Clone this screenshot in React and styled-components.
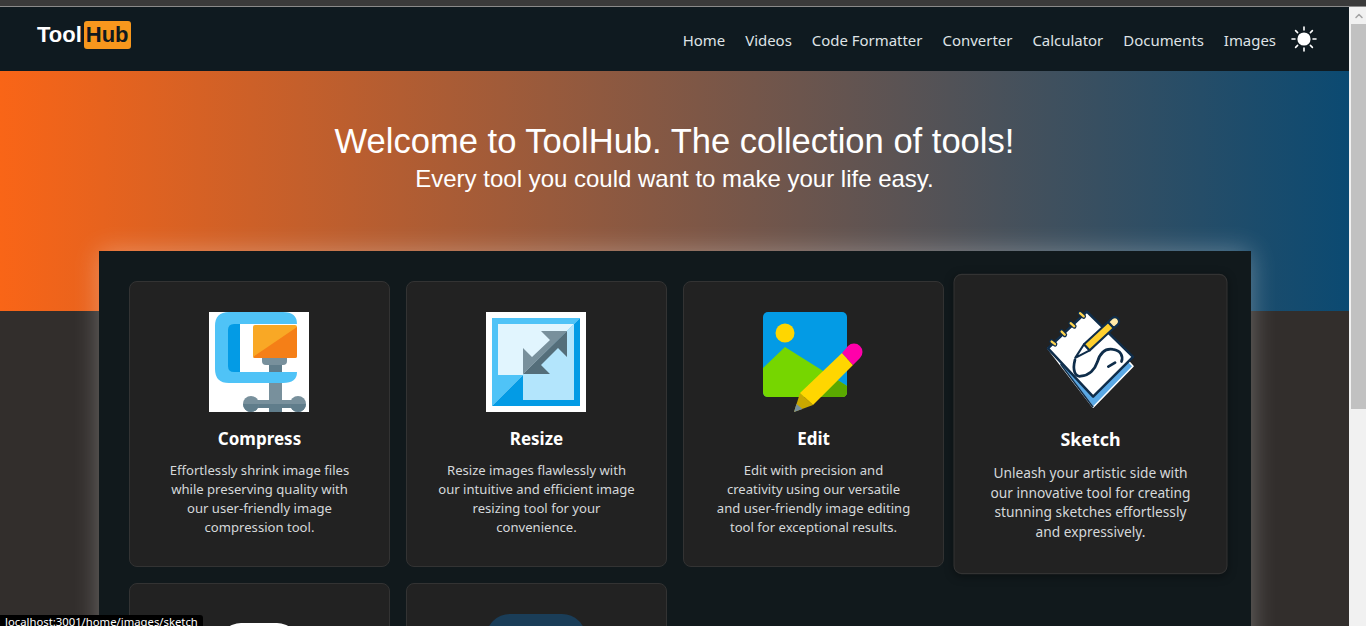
import React from 'react';
import styled, { createGlobalStyle } from 'styled-components';
import { ChevronUp } from 'lucide-react';

const Global = createGlobalStyle`
  html, body {
    margin: 0;
    height: 100%;
    overflow: hidden;
    background: #322e2c;
  }
  #root {
    height: 100%;
  }
`;

const Shell = styled.div`
  height: 626px;
  display: flex;
  flex-direction: column;
  overflow: hidden;
  position: relative;
`;

const WindowEdge = styled.div`
  height: 6px;
  flex: none;
  background: #3a3a3a;
  border-bottom: 1px solid #8a8a8a;
`;

const Body = styled.div`
  flex: 1;
  min-height: 0;
  display: flex;
`;

const Page = styled.div`
  flex: 1;
  min-width: 0;
  overflow: hidden;
  background: #322e2c;
`;

const ScrollTrack = styled.div`
  width: 17px;
  flex: none;
  background: #f1f1f1;
  display: flex;
  flex-direction: column;
  align-items: center;
  box-sizing: border-box;
  padding-left: 2px;
`;

const ScrollArrow = styled.div`
  height: 17px;
  display: flex;
  align-items: center;
  justify-content: center;
  color: #a3a3a3;
`;

const ScrollThumb = styled.div`
  width: 15px;
  height: 385px;
  background: #c1c1c1;
`;

const Nav = styled.nav`
  height: 64px;
  box-sizing: border-box;
  background: #0f1a20;
  display: flex;
  justify-content: space-between;
  padding: 0 32px 0 37px;
`;

const Logo = styled.div`
  display: flex;
  align-items: center;
  gap: 2px;
  height: 56px;
  font-family: 'Liberation Sans', Arial, sans-serif;
  font-weight: 700;
  font-size: 22px;
  color: #ffffff;
`;

const LogoBadge = styled.span`
  background: #f7971d;
  color: #10191f;
  border-radius: 3px;
  padding: 3px 2px;
  line-height: 22px;
`;

const NavLinks = styled.div`
  display: flex;
  align-items: center;
  gap: 20px;
  padding-top: 1px;
`;

const NavLink = styled.a`
  font-family: 'Noto Sans', 'Open Sans', sans-serif;
  font-size: 14.95px;
  color: #dfe3e6;
  text-decoration: none;
`;

const SunButton = styled.span`
  display: flex;
  margin-left: -5px;
  margin-top: -2px;
`;

const Hero = styled.header`
  height: 240px;
  box-sizing: border-box;
  padding-top: 49px;
  background: linear-gradient(90deg, #f96517 0%, #0b4a72 100%);
  text-align: center;
  font-family: 'Liberation Sans', Arial, sans-serif;
  color: #ffffff;
`;

const HeroTitle = styled.h1`
  margin: 0;
  font-size: 34.56px;
  font-weight: 400;
  line-height: 42px;
`;

const HeroSub = styled.p`
  margin: 0;
  font-size: 24px;
  line-height: 34px;
`;

const Panel = styled.main`
  width: 1152px;
  margin: -60px 0 0 99px;
  box-sizing: border-box;
  padding: 30px;
  position: relative;
  background: #11191c;
  box-shadow: 0 0 24px rgba(255, 255, 255, 0.3);
  display: grid;
  grid-template-columns: repeat(4, 261px);
  grid-auto-rows: 286px;
  gap: 16px;
`;

const Card = styled.article`
  box-sizing: border-box;
  padding-top: 30px;
  background: #222222;
  border: 1px solid #333333;
  border-radius: 8px;
  text-align: center;
  transform: ${(p) => (p.$hovered ? 'scale(1.05)' : 'none')};
  box-shadow: ${(p) => (p.$hovered ? '0 2px 8px rgba(0, 0, 0, 0.35)' : 'none')};
`;

const IconFrame = styled.svg`
  display: block;
  width: 100px;
  height: 100px;
  margin: 0 0 15px 79px;
`;

const CardTitle = styled.h3`
  margin: 0 0 10px;
  font-family: 'Noto Sans', 'Open Sans', sans-serif;
  font-size: 17px;
  font-weight: 700;
  line-height: 24px;
  color: #ffffff;
`;

const CardText = styled.p`
  margin: 0;
  font-family: 'Noto Sans', 'Open Sans', sans-serif;
  font-size: 13.1px;
  line-height: 19px;
  color: #d5d8da;
`;

const StatusTip = styled.div`
  position: absolute;
  left: 0;
  bottom: 0;
  width: 203px;
  height: 11px;
  overflow: hidden;
  box-sizing: border-box;
  padding-left: 5px;
  background: #000000;
  border-top-right-radius: 3px;
  font-family: 'Noto Sans', 'Open Sans', sans-serif;
  font-size: 11.3px;
  line-height: 13px;
  color: #ffffff;
  white-space: nowrap;
`;

const Sun = () => (
  <svg width="26" height="26" viewBox="0 0 26 26" stroke="#fff" strokeWidth="1.6" strokeLinecap="round">
    <circle cx="13" cy="13" r="6.6" fill="#fff" stroke="none" />
    <path d="M13 1v3M13 22v3M1 13h3M22 13h3M4.6 4.6l2 2M19.4 19.4l2 2M4.6 21.4l2-2M19.4 6.6l2-2" />
  </svg>
);

const CompressIcon = () => (
  <IconFrame viewBox="0 0 100 100">
    <rect width="100" height="100" fill="#fff" />
    <path d="M20 0H74Q88 0 88 12H31V60H88Q88 71 74 71H20Q6 71 6 57V14Q6 0 20 0Z" fill="#4fc3f7" />
    <path d="M25 12H31V60H25Q19 60 19 54V18Q19 12 25 12Z" fill="#039be5" />
    <rect x="60" y="71" width="13" height="29" fill="#78909c" />
    <rect x="60" y="53" width="13" height="7" fill="#607d8b" />
    <rect x="40" y="88" width="50" height="4" fill="#78909c" />
    <rect x="40" y="92" width="50" height="4" fill="#607d8b" />
    <circle cx="42" cy="92" r="8" fill="#78909c" />
    <circle cx="89" cy="92" r="8" fill="#78909c" />
    <path d="M34 92H50A8 8 0 0 1 34 92ZM81 92H97A8 8 0 0 1 81 92Z" fill="#607d8b" />
    <rect x="60" y="92" width="13" height="8" fill="#607d8b" />
    <path d="M53 46H78V49Q78 53 74 53H57Q53 53 53 49Z" fill="#78909c" />
    <rect x="44" y="13" width="44" height="33" rx="2" fill="#f9a825" />
    <path d="M88 15V44Q88 46 86 46H46Q45 46 44 45Z" fill="#f57f17" />
  </IconFrame>
);

const ResizeIcon = () => (
  <IconFrame viewBox="0 0 100 100">
    <rect width="100" height="100" fill="#fff" />
    <path d="M6 6H94L6 94Z" fill="#4fc3f7" />
    <path d="M94 6V94H6Z" fill="#039be5" />
    <path d="M12 12H88L37 63H12Z" fill="#e1f5fe" />
    <path d="M88 12V88H37V63Z" fill="#b3e5fc" />
    <path d="M81 19H55L64 28L46 45L37 36V62Z" fill="#78909c" />
    <path d="M81 19V45L72 36L55 53L64 62H37Z" fill="#546e7a" />
  </IconFrame>
);

const EditIcon = () => (
  <IconFrame viewBox="0 0 100 100">
    <rect width="84" height="85" rx="5" fill="#039be5" />
    <circle cx="22" cy="21" r="9.5" fill="#ffd600" />
    <path d="M0 56L22 35L84 74V80Q84 85 79 85H5Q0 85 0 80Z" fill="#76d600" />
    <path d="M74.8 68.2L84 74V80Q84 85 79 85H58Z" fill="#5aa800" />
    <path d="M31 100L37 81L50 93Z" fill="#c9a800" />
    <path d="M31 100L33.5 92L39.5 97Z" fill="#78909c" />
    <path d="M37 81L79 41L90 53L50 93Z" fill="#ffd600" />
    <path d="M79 41L85 34A8 8 0 0 1 97 46L90 53Z" fill="#ff00aa" />
  </IconFrame>
);

const SketchIcon = () => (
  <IconFrame viewBox="0 0 100 100">
    <path d="M10 40L53 96L91 57L80 45Z" fill="#5aa9e6" stroke="#fff" strokeWidth="1.5" strokeLinejoin="round" />
    <path d="M22 55L53 96" stroke="#0f2d4a" strokeWidth="1.5" />
    <path d="M47 5L91 48L53 86L10 40Z" fill="#fff" stroke="#0f2d4a" strokeWidth="2.4" strokeLinejoin="round" />
    <path d="M13.5 33.5L16.7 36M23 24L26 27M31.6 16L35 19M40.5 6.5L44 9.5" stroke="#0f2d4a" strokeWidth="4.5" strokeLinecap="round" />
    <path d="M13.5 33.5L16.7 36M23 24L26 27M31.6 16L35 19M40.5 6.5L44 9.5" stroke="#ffd54f" strokeWidth="2.2" strokeLinecap="round" />
    <path d="M36 49L44.3 36.1L49.7 41.9Z" fill="#fff" stroke="#0f2d4a" strokeWidth="2" strokeLinejoin="round" />
    <path d="M44.3 36.1L67.3 14.8L72.7 20.6L49.7 41.9Z" fill="#ffd02e" stroke="#0f2d4a" strokeWidth="2" strokeLinejoin="round" />
    <path d="M67.3 14.8L71 11.3Q74 9 76.5 11.5Q79 14.5 76.4 17.2L72.7 20.6Z" fill="#ffe9a8" stroke="#0f2d4a" strokeWidth="2" strokeLinejoin="round" />
    <path
      d="M35.7 51C33 61 36 67 41 66.5C50 66 55 59 57 53C60 43 66 40 72 41C79 42 82 47 80 52.5M67.5 57.3L73.9 53.5"
      fill="none"
      stroke="#0f2d4a"
      strokeWidth="2.6"
      strokeLinecap="round"
    />
  </IconFrame>
);

const ToggleIcon = () => (
  <IconFrame viewBox="0 0 100 100">
    <rect x="10" y="9" width="80" height="60" rx="22" fill="#fff" />
  </IconFrame>
);

const VideoIcon = () => (
  <IconFrame viewBox="0 0 100 100">
    <rect width="100" height="100" rx="24" fill="#1a3d58" />
  </IconFrame>
);

const links = ['Home', 'Videos', 'Code Formatter', 'Converter', 'Calculator', 'Documents', 'Images'];

const tools = [
  {
    title: 'Compress',
    icon: <CompressIcon />,
    lines: ['Effortlessly shrink image files', 'while preserving quality with', 'our user-friendly image', 'compression tool.'],
  },
  {
    title: 'Resize',
    icon: <ResizeIcon />,
    lines: ['Resize images flawlessly with', 'our intuitive and efficient image', 'resizing tool for your', 'convenience.'],
  },
  {
    title: 'Edit',
    icon: <EditIcon />,
    lines: ['Edit with precision and', 'creativity using our versatile', 'and user-friendly image editing', 'tool for exceptional results.'],
  },
  {
    title: 'Sketch',
    icon: <SketchIcon />,
    hovered: true,
    lines: ['Unleash your artistic side with', 'our innovative tool for creating', 'stunning sketches effortlessly', 'and expressively.'],
  },
  { key: 'fifth', icon: <ToggleIcon />, lines: [] },
  { key: 'sixth', icon: <VideoIcon />, lines: [] },
];

const App = () => (
  <>
    <Global />
    <Shell>
      <WindowEdge />
      <Body>
        <Page>
          <Nav>
            <Logo>
              Tool <LogoBadge>Hub</LogoBadge>
            </Logo>
            <NavLinks>
              {links.map((l) => (
                <NavLink key={l}>{l}</NavLink>
              ))}
              <SunButton>
                <Sun />
              </SunButton>
            </NavLinks>
          </Nav>
          <Hero>
            <HeroTitle>Welcome to ToolHub. The collection of tools!</HeroTitle>
            <HeroSub>Every tool you could want to make your life easy.</HeroSub>
          </Hero>
          <Panel>
            {tools.map((t) => (
              <Card key={t.title || t.key} $hovered={t.hovered}>
                {t.icon}
                {t.title && <CardTitle>{t.title}</CardTitle>}
                {t.lines.length > 0 && (
                  <CardText>
                    {t.lines.map((line) => (
                      <React.Fragment key={line}>
                        {line}
                        <br />
                      </React.Fragment>
                    ))}
                  </CardText>
                )}
              </Card>
            ))}
          </Panel>
        </Page>
        <ScrollTrack>
          <ScrollArrow>
            <ChevronUp size={12} strokeWidth={3} />
          </ScrollArrow>
          <ScrollThumb />
        </ScrollTrack>
      </Body>
      <StatusTip>localhost:3001/home/images/sketch</StatusTip>
    </Shell>
  </>
);

export default App;
